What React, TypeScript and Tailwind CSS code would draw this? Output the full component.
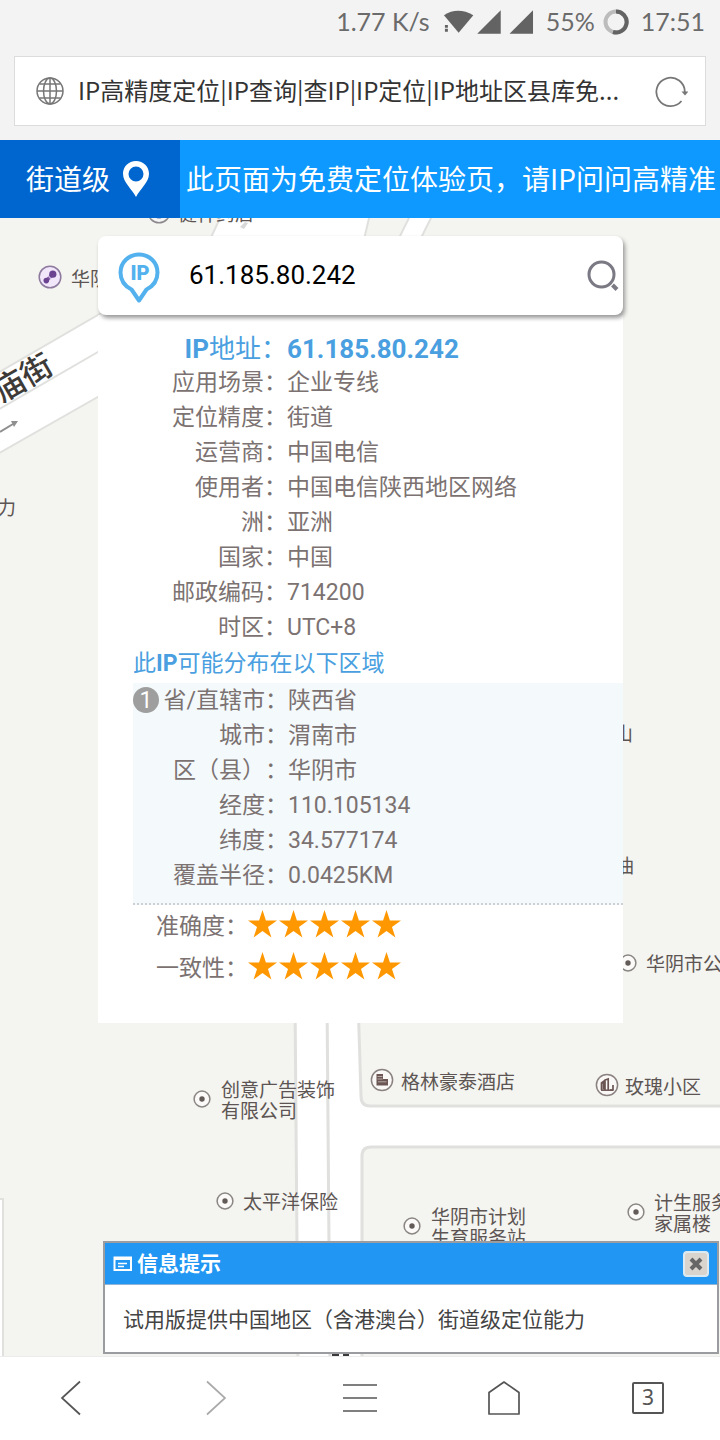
import React, { useState } from 'react';

const CJK = "font-['Noto_Sans_CJK_SC',sans-serif]";

interface Field {
  label: string;
  value: string;
}

const details: Field[] = [
  { label: '应用场景', value: '企业专线' },
  { label: '定位精度', value: '街道' },
  { label: '运营商', value: '中国电信' },
  { label: '使用者', value: '中国电信陕西地区网络' },
  { label: '洲', value: '亚洲' },
  { label: '国家', value: '中国' },
  { label: '邮政编码', value: '714200' },
  { label: '时区', value: 'UTC+8' },
];

const region: Field[] = [
  { label: '省/直辖市', value: '陕西省' },
  { label: '城市', value: '渭南市' },
  { label: '区（县）', value: '华阴市' },
  { label: '经度', value: '110.105134' },
  { label: '纬度', value: '34.577174' },
  { label: '覆盖半径', value: '0.0425KM' },
];

const ratings = [
  { label: '准确度', stars: 5 },
  { label: '一致性', stars: 5 },
];

type PinKind = 'dot' | 'hotel' | 'estate' | 'leisure' | 'shop' | 'none';

interface Poi {
  lines: string[];
  kind: PinKind;
  place: string;
}

const pois: Poi[] = [
  { lines: ['健祥药店'], kind: 'shop', place: 'left-[147px] top-[-18px] gap-[7px]' },
  { lines: ['华阴'], kind: 'leisure', place: 'left-[38px] top-[47px] gap-[9px]' },
  { lines: ['力'], kind: 'none', place: 'left-[-3px] top-[278px]' },
  { lines: ['山'], kind: 'none', place: 'left-[614px] top-[504px]' },
  { lines: ['油'], kind: 'none', place: 'left-[615px] top-[636px]' },
  { lines: ['华阴市公'], kind: 'dot', place: 'left-[619px] top-[734px] gap-[9px]' },
  { lines: ['创意广告装饰', '有限公司'], kind: 'dot', place: 'left-[193px] top-[860px] gap-[10px]' },
  { lines: ['格林豪泰酒店'], kind: 'hotel', place: 'left-[370px] top-[850px] gap-[7px]' },
  { lines: ['玫瑰小区'], kind: 'estate', place: 'left-[595px] top-[855px] gap-[6px]' },
  { lines: ['太平洋保险'], kind: 'dot', place: 'left-[216px] top-[972px] gap-[9px]' },
  { lines: ['华阴市计划', '生育服务站'], kind: 'dot', place: 'left-[403px] top-[987px] gap-[10px]' },
  { lines: ['计生服务', '家属楼'], kind: 'dot', place: 'left-[627px] top-[973px] gap-[9px]' },
];

const PinIcon: React.FC<{ kind: PinKind }> = ({ kind }) => {
  if (kind === 'none') return null;

  if (kind === 'dot') {
    return (
      <svg viewBox="0 0 18 18" className="w-[18px] h-[18px] shrink-0">
        <circle cx="9" cy="9" r="7.9" fill="#fbfaf8" stroke="#8a8683" strokeWidth="1.5" />
        <circle cx="9" cy="9" r="2.7" fill="#625b58" />
      </svg>
    );
  }

  return (
    <svg viewBox="0 0 24 24" className="w-6 h-6 shrink-0">
      {kind === 'leisure' && (
        <>
          <circle cx="12" cy="12" r="10.8" fill="#f1e6fa" stroke="#8d7a9e" strokeWidth="1.5" />
          <path d="M8 16l7-7" stroke="#8560a8" strokeWidth="3.5" strokeLinecap="round" />
          <circle cx="14.800" cy="9.200" r="3.600" fill="#6b4391" />
          <circle cx="8.300" cy="15.600" r="2.800" fill="#6b4391" />
          <path d="M10.300 10.800l3.200 3.400" stroke="#f1e6fa" strokeWidth="1" />
        </>
      )}
      {kind === 'shop' && (
        <>
          <circle cx="12" cy="12" r="10.8" fill="#f6f5f5" stroke="#8d8a8d" strokeWidth="1.5" />
          <path d="M8 15.5a5 5 0 0 0 8 0" fill="none" stroke="#5f7cab" strokeWidth="2" />
        </>
      )}
      {kind === 'hotel' && (
        <>
          <circle cx="12" cy="12" r="10.6" fill="#faf8f7" stroke="#8a8280" strokeWidth="1.5" />
          <path d="M6.500 6h6.500v5h5v6.500h-11.500z" fill="#6b5552" />
          <path d="M7.500 8.500h5M7.500 11h5M8 13.800h8.500" stroke="#c9bfbc" strokeWidth="0.8" />
        </>
      )}
      {kind === 'estate' && (
        <>
          <circle cx="12" cy="12" r="10.6" fill="#faf8f7" stroke="#8a8280" strokeWidth="1.5" />
          <path d="M6.500 17V10l2-1.500v8M10 17V7l3.200-1v11M15 17h3v-5" fill="none" stroke="#6b5552" strokeWidth="1.700" />
          <path d="M6 17.200h12" stroke="#6b5552" strokeWidth="1.500" />
        </>
      )}
    </svg>
  );
};

const MapLayer = () => (
  <div className={`absolute inset-0 overflow-hidden bg-[#f4f4f0] ${CJK}`}>
    <svg viewBox="0 0 720 1138" preserveAspectRatio="xMidYMin slice" className="absolute inset-0 w-full h-full">
      <g fill="#ffffff" stroke="#e0e0de" strokeWidth="2">
        <path d="M-4 156L110 90V172L-4 237z" />
        <path d="M-4 193L110 127" />
        <path d="M222-4L206 30H362L370-4z" />
        <path d="M411-4L394 30H416L433-4z" />
        <path d="M295 780L298 1150H362V938Q362 929 371 929H730V888H370Q361 888 361 878L358 780z" strokeWidth="3" />
        <path d="M327 780L330 1150" strokeWidth="3" />
        <path d="M-4 981H3V1150H-4z" />
      </g>
      <path d="M240 9l5-5 3 1-4 6z" fill="#d8d8d8" />
      <path d="M0 214L13 206" stroke="#8f8f8f" strokeWidth="2" />
      <path d="M11 203L18 203L14 209z" fill="#8f8f8f" />
      <path d="M332 1137h7M343 1137h6" stroke="#3a3a3a" strokeWidth="2" />
    </svg>
    <span className="absolute left-[-9px] top-[138px] -rotate-30 text-[31px] font-medium leading-10 text-[#3d3a38] whitespace-nowrap">
      庙街
    </span>
    {pois.map((poi) => (
      <div key={poi.lines[0]} className={`absolute flex items-center ${poi.place}`}>
        <PinIcon kind={poi.kind} />
        <span className="text-[19px] leading-[21px] text-[#5c5553] whitespace-nowrap">
          {poi.lines.map((line) => (
            <span key={line} className="block">
              {line}
            </span>
          ))}
        </span>
      </div>
    ))}
  </div>
);

const Star = () => (
  <svg viewBox="0 0 28 27" className="w-[29px] h-7">
    <path
      d="M14 0L17.300 10H28L19.300 16.300L22.600 26.600L14 20.300L5.400 26.600L8.700 16.300L0 10H10.700z"
      fill="#ff9800"
    />
  </svg>
);

const StatusBar = () => (
  <div className="flex h-11 items-center justify-end pr-[15px] text-[25px] text-[#6b6b6b] font-['Lato',sans-serif]">
    <span>1.77 K/s</span>
    <svg viewBox="0 0 94 26" className="ml-3 w-[92px] h-[26px]" fill="#636363">
      <path d="M2 6Q16-3 32 6L17 24z" />
      <path d="M3 16h3v3H3zM3 20h3v3H3z" />
      <path d="M60 1V25H36zM93 1V25H69z" />
    </svg>
    <span className="ml-3">55%</span>
    <svg viewBox="0 0 26 26" className="ml-2 w-[26px] h-[26px]" fill="none" strokeWidth="4">
      <circle cx="13" cy="13" r="10.500" stroke="#bcbcbc" />
      <path d="M13 2.500A10.500 10.500 0 1 1 10 23" stroke="#636363" />
    </svg>
    <span className="ml-3">17:51</span>
  </div>
);

const AddressBar = () => (
  <div className="mx-3.5 mt-3 mb-3.5 flex h-[70px] items-center border border-[#dcdcdc] bg-white pl-[21px] pr-[17px]">
    <svg viewBox="0 0 28 28" className="w-7 h-7 shrink-0" fill="none" stroke="#777" strokeWidth="1.500">
      <circle cx="14" cy="14" r="13" />
      <ellipse cx="14" cy="14" rx="6.500" ry="13" />
      <path d="M14 1v26M1 14h26M3.500 7h21M3.500 21h21" />
    </svg>
    <input
      aria-label="网址"
      readOnly
      defaultValue="IP高精度定位|IP查询|查IP|IP定位|IP地址区县库免..."
      className={`ml-[14px] min-w-0 flex-1 bg-transparent pb-0.5 text-2xl text-[#333] outline-none ${CJK}`}
    />
    <button aria-label="刷新" className="ml-4 shrink-0">
      <svg viewBox="0 0 34 34" className="w-[34px] h-[34px]" fill="none" stroke="#777" strokeWidth="1.800">
        <path d="M27.500 27A14.200 14.200 0 1 1 30.800 18" />
        <path d="M27.500 17.500h7l-3.500 4z" fill="#777" stroke="none" />
      </svg>
    </button>
  </div>
);

const Banner = () => (
  <div className={`flex h-[78px] items-center text-[28px] text-white ${CJK}`}>
    <div className="flex h-full w-[180px] shrink-0 items-center gap-[13px] bg-[#0066cf] pl-[26px]">
      <span className="pb-0.5">街道级</span>
      <svg viewBox="0 0 26 36" className="w-[26px] h-9">
        <path
          d="M13 0C5.600 0 0 5.600 0 12.800C0 21.500 9 28 13 36C17 28 26 21.500 26 12.800C26 5.600 20.400 0 13 0zM13 20.500a7.500 7.500 0 1 1 0-15a7.500 7.500 0 0 1 0 15z"
          fill="#ffffff"
          fillRule="evenodd"
        />
      </svg>
    </div>
    <p className="flex h-full min-w-0 flex-1 items-center overflow-hidden whitespace-nowrap bg-[#0d99ff] pb-0.5 pl-1.5">
      此页面为免费定位体验页，请IP问问高精准
    </p>
  </div>
);

const SearchBox = () => (
  <form
    onSubmit={(e) => e.preventDefault()}
    className="relative flex h-[79px] items-center rounded-lg bg-white pl-5 pr-1 shadow-[2px_3px_4px_#999]"
  >
    <svg viewBox="0 0 42 52" className="mt-1 w-[42px] h-[52px] shrink-0">
      <path
        d="M21 2.500C10.500 2.500 2.500 10.500 2.500 20.500C2.500 28.500 7.500 34.500 13.500 37.500L21 48.500L28.500 37.500C34.500 34.500 39.500 28.500 39.500 20.500C39.500 10.500 31.500 2.500 21 2.500z"
        fill="none"
        stroke="#53b1ee"
        strokeWidth="4"
        strokeLinejoin="round"
      />
      <text x="22" y="28" textAnchor="middle" fontFamily="Roboto, sans-serif" fontSize="20" fontWeight="900" fill="#53b1ee">
        IP
      </text>
    </svg>
    <input
      aria-label="IP地址"
      defaultValue="61.185.80.242"
      className="ml-[29px] min-w-0 flex-1 bg-transparent text-[26px] text-black outline-none"
    />
    <button aria-label="查询" className="shrink-0">
      <svg viewBox="0 0 32 32" className="w-8 h-8" fill="none" stroke="#7b7983">
        <circle cx="14.500" cy="14.500" r="12.500" strokeWidth="3" />
        <path d="M25.500 25l4.500 4.500" strokeWidth="4" />
      </svg>
    </button>
  </form>
);

const ResultPanel = () => (
  <section className="bg-white pt-[19px] pb-[34px] text-[23px] leading-[35px] text-[#7b7271]">
    <dl>
      <div className="flex text-[26px] leading-[31px] text-[#4a9fe0]">
        <dt className="w-[189px] shrink-0 text-right">
          <b>IP</b>地址：
        </dt>
        <dd className="font-bold">61.185.80.242</dd>
      </div>
      {details.map((field) => (
        <div key={field.label} className="flex">
          <dt className="w-[189px] shrink-0 text-right">{field.label}：</dt>
          <dd>{field.value}</dd>
        </div>
      ))}
    </dl>

    <h2 className="pl-[35px] leading-[38px] text-[#4a9fe0]">
      此<b>IP</b>可能分布在以下区域
    </h2>
    <div className="relative ml-[35px] border-b-2 border-dotted border-[#ccd0d4] bg-[#f4f9fc] pb-[10px]">
      <span className="absolute left-0 top-1 flex h-[26px] w-[26px] items-center justify-center rounded-full bg-[#9e9e9e] text-[23px] text-white">
        1
      </span>
      <dl>
        {region.map((field) => (
          <div key={field.label} className="flex">
            <dt className="w-[155px] shrink-0 text-right whitespace-nowrap [text-spacing-trim:space-all]">
              {field.label}：
            </dt>
            <dd>{field.value}</dd>
          </div>
        ))}
      </dl>
    </div>

    <dl>
      {ratings.map((rating) => (
        <div key={rating.label} className="flex h-[42px] items-center">
          <dt className="w-[150px] shrink-0 text-right">{rating.label}：</dt>
          <dd className="flex gap-[2px] pb-1" aria-label={`${rating.stars}星`}>
            {Array.from({ length: rating.stars }, (_, i) => (
              <Star key={i} />
            ))}
          </dd>
        </div>
      ))}
    </dl>
  </section>
);

const NoticePopup: React.FC<{ onClose: () => void }> = ({ onClose }) => (
  <aside className={`absolute bottom-[2px] right-px left-[103px] border-2 border-[#9a9c9f] bg-white ${CJK}`}>
    <header className="flex h-[42px] items-center border-b border-[#8fb4d6] bg-[#2196f3] pl-2 pr-2">
      <svg viewBox="0 0 20 16" className="w-5 h-4 shrink-0" fill="none" stroke="#ffffff">
        <path d="M1.500 1.500h16.500v12.500H1.500z" strokeWidth="2" />
        <path d="M1.500 3h16.500" strokeWidth="2" />
        <path d="M5 7.500h9M5 10.500h6" strokeWidth="1.500" />
      </svg>
      <h3 className="ml-1 pb-0.5 text-[21px] font-bold text-white">信息提示</h3>
      <button
        aria-label="关闭"
        onClick={onClose}
        className="ml-auto flex h-[26px] w-[26px] items-center justify-center rounded border-2 border-[#dcebf3] bg-[#d9d4ce]"
      >
        <svg viewBox="0 0 14 14" className="w-3.5 h-3.5">
          <path d="M2 2l10 10M12 2L2 12" stroke="#666" strokeWidth="4" />
        </svg>
      </button>
    </header>
    <p className="px-[18px] py-[17px] text-[21px] leading-[33px] text-[#444]">
      试用版提供中国地区（含港澳台）街道级定位能力
    </p>
  </aside>
);

const BottomNav = () => (
  <nav className="grid h-[84px] grid-cols-5 place-items-center border-t border-[#ececec] bg-white pb-0.5 text-[#555]">
    <button aria-label="后退">
      <svg viewBox="0 0 36 36" className="w-9 h-9" fill="none" stroke="currentColor" strokeWidth="1.700">
        <path d="M26 1.500L8 18L26 34.500" />
      </svg>
    </button>
    <button aria-label="前进">
      <svg viewBox="0 0 36 36" className="w-9 h-9 text-[#aaa]" fill="none" stroke="currentColor" strokeWidth="1.700">
        <path d="M9 1.500L27 18L9 34.500" />
      </svg>
    </button>
    <button aria-label="菜单">
      <svg viewBox="0 0 36 36" className="w-9 h-9" stroke="currentColor" strokeWidth="1.700">
        <path d="M1 5h34M1 18h34M1 31h34" />
      </svg>
    </button>
    <button aria-label="主页">
      <svg viewBox="0 0 36 36" className="w-9 h-9" fill="none" stroke="currentColor" strokeWidth="1.700" strokeLinejoin="round">
        <path d="M18 2L33 12.500V34H3V12.500z" />
      </svg>
    </button>
    <button
      aria-label="标签页"
      className="flex h-8 w-8 items-center justify-center rounded-xs border-2 border-[#555] text-[21px] font-['Noto_Sans',sans-serif]"
    >
      3
    </button>
  </nav>
);

export default function App() {
  const [noticeOpen, setNoticeOpen] = useState(true);

  return (
    <div className="flex min-h-screen flex-col bg-[#f3f3f3] font-['Roboto','Noto_Sans_CJK_SC',sans-serif]">
      <StatusBar />
      <AddressBar />
      <Banner />
      <main className="relative flex-1 overflow-hidden">
        <MapLayer />
        <div className="relative pt-[18px] pr-[97px] pb-28 pl-[98px]">
          <SearchBox />
          <ResultPanel />
        </div>
        {noticeOpen && <NoticePopup onClose={() => setNoticeOpen(false)} />}
      </main>
      <BottomNav />
    </div>
  );
}
